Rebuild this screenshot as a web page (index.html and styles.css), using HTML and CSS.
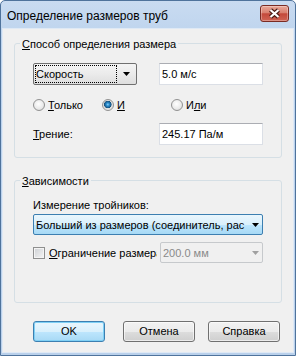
FILE: index.html
```html
<!DOCTYPE html>
<html lang="ru">
<head>
    <meta charset="UTF-8">
    <title>Определение размеров труб</title>
    <link rel="stylesheet" href="styles.css">
</head>
<body>
    <div class="window">
        <div class="titlebar">
            <span class="title">Определение размеров труб</span>
            <div class="close">
                <svg width="27" height="15" viewBox="0 0 27 15">
                    <path d="M9.5 4 L17.5 11 M17.5 4 L9.5 11" stroke="#4a1a14" stroke-width="4.4" fill="none"/>
                    <path d="M9.5 4 L17.5 11 M17.5 4 L9.5 11" stroke="#ffffff" stroke-width="2.2" fill="none"/>
                </svg>
            </div>
        </div>

        <div class="client">
            <div class="group">
                <div class="group-title"><u>С</u>пособ определения размера</div>
                <div class="row first-row">
                    <div class="dropdown">
                        <span class="focus">Скорость</span>
                        <svg class="arrow" width="7" height="4" viewBox="0 0 7 4"><polygon points="0,0 7,0 3.5,4" fill="#000"/></svg>
                    </div>
                    <div class="field">5.0 м/с</div>
                </div>
                <div class="radios">
                    <div class="radio"><span class="dot"></span><span><u>Т</u>олько</span></div>
                    <div class="radio"><span class="dot checked"></span><span><u>И</u></span></div>
                    <div class="radio"><span class="dot"></span><span>И<u>л</u>и</span></div>
                </div>
                <div class="row friction-row">
                    <span><u>Т</u>рение:</span>
                    <div class="field">245.17 Па/м</div>
                </div>
            </div>

            <div class="group group-deps">
                <div class="group-title"><u>З</u>ависимости</div>
                <div class="tee-label">Измерение тройников:</div>
                <div class="combo hot">
                    <span class="combo-text">Больший из размеров (соединитель, рас</span>
                    <svg class="arrow" width="7" height="4" viewBox="0 0 7 4"><polygon points="0,0 7,0 3.5,4" fill="#000"/></svg>
                </div>
                <div class="row limit-row">
                    <div class="check-item"><span class="checkbox"></span><span><u>О</u>граничение размера</span></div>
                    <div class="combo disabled">
                        <span class="combo-text">200.0 мм</span>
                        <svg class="arrow" width="7" height="4" viewBox="0 0 7 4"><polygon points="0,0 7,0 3.5,4" fill="#a0a0a0"/></svg>
                    </div>
                </div>
            </div>

            <div class="buttons">
                <div class="btn default">OK</div>
                <div class="btn cancel">Отмена</div>
                <div class="btn help">Справка</div>
            </div>
        </div>
    </div>
</body>
</html>
```

FILE: styles.css
```css
body {
    margin: 0;
    font-family: "Liberation Sans", Arial, sans-serif;
    font-size: 11px;
    line-height: 14px;
    color: #000;
    background: #fff;
}
.window {
    width: 296px;
    height: 356px;
    box-sizing: border-box;
    border: 1px solid #4f739c;
    border-radius: 5px 5px 0 0;
    background: linear-gradient(#c9dbf1, #bcd3ed 40px, #b9d0eb);
    display: flex;
    flex-direction: column;
}
.titlebar {
    height: 28px;
    flex: none;
    display: flex;
    align-items: center;
    padding: 0 6px;
}
.title {
    font-size: 12px;
    margin-top: 1px;
}
.close {
    margin-left: auto;
    align-self: flex-start;
    margin-top: 4px;
    width: 29px;
    height: 17px;
    box-sizing: border-box;
    border: 1px solid #7a2b24;
    border-radius: 3px;
    background: linear-gradient(#eaa899, #d98070 45%, #c4493b 52%, #cf6454);
    box-shadow: inset 0 0 0 1px rgba(255,255,255,0.3);
}
.close svg {
    display: block;
}
.client {
    flex: 1;
    margin: 0 2px 3px;
    background: #f0f0f0;
    padding: 14px 11px 0;
    box-shadow: 0 0 0 1px #dfe9f5;
}
.group {
    border: 1px solid #d5dfe5;
    border-radius: 3px;
    padding: 0 18px 12px;
}
.group-title {
    width: max-content;
    margin: -7px 0 0 -13px;
    padding: 0 2px;
    background: #f0f0f0;
}
.row {
    display: flex;
    align-items: center;
}
.first-row {
    margin-top: 12px;
}
.dropdown {
    width: 104px;
    height: 22px;
    box-sizing: border-box;
    border: 1px solid #707070;
    border-radius: 2px;
    padding: 1px;
    background: linear-gradient(#f4f4f4, #ebebeb 50%, #dedede);
    display: flex;
    align-items: center;
}
.focus {
    width: 82px;
    height: 18px;
    box-sizing: border-box;
    border: 1px dotted #000;
    line-height: 16px;
}
.dropdown .arrow {
    margin-left: auto;
    margin-right: 5px;
}
.field {
    margin-left: auto;
    width: 104px;
    height: 22px;
    box-sizing: border-box;
    border: 1px solid #dbdfe6;
    border-top-color: #abadb3;
    background: #fff;
    padding: 0 2px;
    line-height: 20px;
}
.radios {
    margin-top: 12px;
    height: 16px;
    display: grid;
    grid-template-columns: 69px 69px auto;
}
.radio {
    display: flex;
    align-items: center;
    gap: 3px;
}
.dot {
    width: 12px;
    height: 12px;
    box-sizing: border-box;
    border-radius: 50%;
    border: 1px solid #929292;
    background: radial-gradient(circle at 45% 40%, #ffffff, #e9e9e9 60%, #cfcfcf);
}
.dot.checked {
    background: radial-gradient(circle at 48% 45%, #8fd2f6 0, #2b8ed0 1.5px, #17507c 3.5px, #dcdcdc 4px, #f4f4f4 100%);
}
.friction-row {
    margin-top: 10px;
}
.tee-label {
    margin-top: 10px;
}
.combo {
    height: 21px;
    box-sizing: border-box;
    border-radius: 2px;
    display: flex;
    align-items: center;
    padding: 0 3px 0 2px;
}
.combo.hot {
    margin-top: 2px;
    border: 1px solid #3c7fb1;
    background: linear-gradient(#eaf6fd, #d9f0fc 50%, #bee6fd 51%, #a7d9f5);
}
.combo-text {
    flex: 1;
    overflow: hidden;
    white-space: nowrap;
}
.combo .arrow {
    flex: none;
    margin-left: 4px;
}
.limit-row {
    margin-top: 7px;
    height: 21px;
}
.check-item {
    width: 124px;
    overflow: hidden;
    white-space: nowrap;
    display: flex;
    align-items: center;
    gap: 4px;
}
.checkbox {
    flex: none;
    width: 12px;
    height: 12px;
    box-sizing: border-box;
    border: 1px solid #8e8f8f;
    background: linear-gradient(135deg, #cdd0d4, #f5f5f5);
    box-shadow: inset 0 0 0 1px #f4f4f4;
}
.combo.disabled {
    margin-left: auto;
    width: 103px;
    border: 1px solid #c6c9cc;
    background: #f0f0f0;
    color: #8a8a8a;
}
.group-deps {
    margin-top: 22px;
    padding-bottom: 39px;
}
.buttons {
    display: flex;
    margin-top: 18px;
    padding-left: 19px;
}
.btn {
    width: 72px;
    height: 21px;
    box-sizing: border-box;
    border: 1px solid #707070;
    border-radius: 3px;
    background: linear-gradient(#f2f2f2, #ebebeb 50%, #dddddd 51%, #cfcfcf);
    box-shadow: inset 0 0 0 1px rgba(255,255,255,0.6);
    text-align: center;
    line-height: 19px;
}
.btn.default {
    border-color: #3c7fb1;
    background: linear-gradient(#eaf6fd, #d9f0fc 50%, #bee6fd 51%, #a7d9f5);
    box-shadow: inset 0 0 0 1px #7fd0f5;
}
.cancel {
    margin-left: 18px;
}
.help {
    margin-left: 13px;
}
```
